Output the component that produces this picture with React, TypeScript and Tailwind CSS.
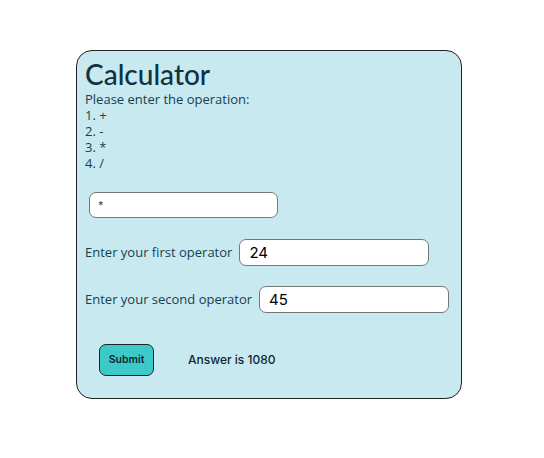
export default function App() {
  return (
    <div className="w-[544px] h-[458px] bg-white pt-[50px] pl-[76px]">
      <div className="w-[386px] h-[349px] bg-[#c8e9f0] border border-[#222] rounded-[16px] pl-[8px] pt-[7px] text-[#173f52] font-['Open_Sans','Noto_Sans',sans-serif]">
        <h1 className="text-[28px] leading-[32px] font-medium text-[#0f3142] font-['Lato','Noto_Sans',sans-serif]">
          Calculator
        </h1>
        <ol className="text-[13px] leading-[16px] mt-[1px]">
          <li>Please enter the operation:</li>
          <li>1. +</li>
          <li>2. -</li>
          <li>3. *</li>
          <li>4. /</li>
        </ol>
        <div className="mt-[20px] ml-[4px]">
          <input
            readOnly
            value="*"
            className="w-[189px] h-[26px] bg-white border border-[#777] rounded-[7px] px-[8px] text-[11px] text-[#444] outline-none font-['Inter',sans-serif]"
          />
        </div>
        <div className="mt-[21px] flex items-center gap-[7px] text-[13px]">
          <span>Enter your first operator</span>
          <input
            readOnly
            value="24"
            className="w-[190px] h-[27px] bg-white border border-[#777] rounded-[7px] px-[9px] text-[15px] text-black outline-none font-['Inter',sans-serif]"
          />
        </div>
        <div className="mt-[20px] flex items-center gap-[7px] text-[13px]">
          <span>Enter your second operator</span>
          <input
            readOnly
            value="45"
            className="w-[190px] h-[27px] bg-white border border-[#777] rounded-[7px] px-[9px] text-[15px] text-black outline-none font-['Inter',sans-serif]"
          />
        </div>
        <div className="mt-[31px] ml-[14px] flex items-center">
          <button className="w-[55px] h-[32px] bg-[#3ccac8] border-[1.5px] border-[#222] rounded-[7px] text-[10.5px] font-semibold text-[#0f2530] font-['Inter',sans-serif]">
            Submit
          </button>
          <span className="ml-[34px] text-[12px] font-medium text-[#0f2530] font-['Inter',sans-serif]">
            Answer is 1080
          </span>
        </div>
      </div>
    </div>
  );
}
